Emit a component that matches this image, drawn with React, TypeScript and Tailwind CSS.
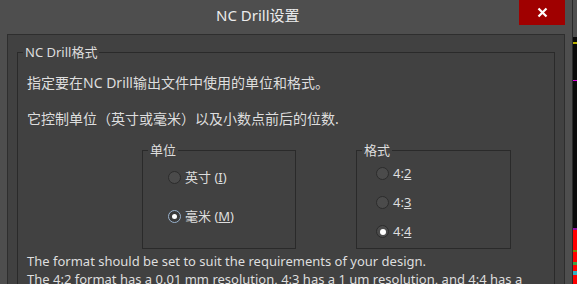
import React from 'react';

const font = { fontFamily: '"Noto Sans", "Noto Sans CJK SC", sans-serif' };

function Radio({ state }: { state: 'off' | 'on' | 'focus' }) {
    if (state === 'off') {
        return <span className="inline-block w-[13px] h-[13px] rounded-full bg-[#4b4b4b] border border-[#2c2c2c]" />;
    }
    if (state === 'focus') {
        return (
            <span className="flex items-center justify-center w-[13px] h-[13px] rounded-full border border-[#9ab3cf] bg-[#3a3a3a]">
                <span className="w-[5px] h-[5px] rounded-full bg-white" />
            </span>
        );
    }
    return (
        <span className="flex items-center justify-center w-[13px] h-[13px] rounded-full border border-[#2c2c2c] bg-[#4b4b4b]">
            <span className="w-[6px] h-[6px] rounded-full bg-white" />
        </span>
    );
}

function GroupBox({ title, className, children }: { title: string; className: string; children: React.ReactNode }) {
    return (
        <div className={`relative border border-[#2a2a2a] ${className}`}>
            {/* legend sits on the border */}
            <span className="absolute -top-[10px] left-[5px] px-[2px] bg-[#414141] leading-[18px] text-[13px] text-[#dedede]">
                {title}
            </span>
            {children}
        </div>
    );
}

export default function App() {
    return (
        <div className="w-[577px] h-[284px] overflow-hidden flex bg-[#4e4e4e] text-[#dedede]" style={font}>
            <div className="w-[573px] h-full flex flex-col border-r border-[#2a2a2a]">
                {/* title bar */}
                <div className="h-[34px] flex items-start shrink-0">
                    <span className="ml-[216px] mt-[5px] text-[15px] leading-[20px] text-[#ececec]">NC Drill设置</span>
                    <button className="ml-auto mr-[7px] w-[46px] h-[25px] bg-[#a00000] flex items-center justify-center">
                        <svg width="11" height="11" viewBox="0 0 11 11">
                            <path d="M1.5 1.5 L9.5 9.5 M9.5 1.5 L1.5 9.5" stroke="#fff" strokeWidth="2.2" />
                        </svg>
                    </button>
                </div>

                {/* content panel */}
                <div className="ml-[7px] w-[558px] flex-1 border border-[#2e2e2e] border-b-0 bg-[#414141] pt-[17px] px-[9px]">
                    <GroupBox title="NC Drill格式" className="h-[260px] pt-[21px] pl-[9px]">
                        <p className="text-[14px] leading-[18px]">指定要在NC Drill输出文件中使用的单位和格式。</p>
                        <p className="text-[14px] leading-[18px] mt-[18px]">它控制单位（英寸或毫米）以及小数点前后的位数.</p>

                        <div className="flex mt-[22px] ml-[115px] gap-[60px]">
                            <GroupBox title="单位" className="w-[154px] h-[99px] pt-[20px] pl-[25px]">
                                <div className="flex flex-col gap-[26px]">
                                    <label className="flex items-center gap-[4px] text-[13px] leading-[13px]">
                                        <Radio state="off" />
                                        <span>英寸 (<u>I</u>)</span>
                                    </label>
                                    <label className="flex items-center gap-[4px] text-[13px] leading-[13px]">
                                        <Radio state="focus" />
                                        <span>毫米 (<u>M</u>)</span>
                                    </label>
                                </div>
                            </GroupBox>
                            <GroupBox title="格式" className="w-[155px] h-[99px] pt-[16px] pl-[19px]">
                                <div className="flex flex-col gap-[16px]">
                                    <label className="flex items-center gap-[4px] text-[13px] leading-[13px]">
                                        <Radio state="off" />
                                        <span>4:<u>2</u></span>
                                    </label>
                                    <label className="flex items-center gap-[4px] text-[13px] leading-[13px]">
                                        <Radio state="off" />
                                        <span>4:<u>3</u></span>
                                    </label>
                                    <label className="flex items-center gap-[4px] text-[13px] leading-[13px]">
                                        <Radio state="on" />
                                        <span>4:<u>4</u></span>
                                    </label>
                                </div>
                            </GroupBox>
                        </div>

                        <p className="text-[13px] leading-[18px] mt-[3px]">The format should be set to suit the requirements of your design.</p>
                        <p className="text-[13px] leading-[18px] whitespace-nowrap">The 4:2 format has a 0.01 mm resolution, 4:3 has a 1 um resolution, and 4:4 has a</p>
                    </GroupBox>
                </div>
            </div>

            {/* sliver of the PCB canvas behind the dialog */}
            <div className="w-[4px] h-full flex flex-col">
                <div className="h-[37px] bg-[#505050]" />
                <div className="h-[5px] bg-[#0a0a0a]" />
                <div className="h-[2px] bg-[#b8b000]" />
                <div className="h-[36px] bg-[#0a0a0a]" />
                <div className="h-[1px] bg-[#e000e0]" />
                <div className="h-[147px] bg-[#0a0a0a]" />
                <div className="h-[2px] bg-[#9010a0]" />
                <div className="flex-1 bg-[#ff0000] flex flex-col">
                    <div className="h-[20px]" />
                    <div className="h-[2px] bg-[#808000]" />
                    <div className="h-[10px]" />
                    <div className="h-[3px] bg-[#40a040]" />
                    <div className="h-[6px]" />
                    <div className="h-[4px] bg-[#30b0c0]" />
                </div>
            </div>
        </div>
    );
}
